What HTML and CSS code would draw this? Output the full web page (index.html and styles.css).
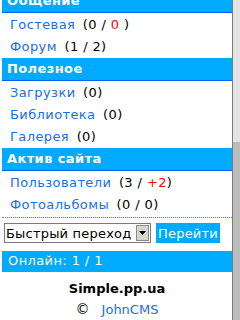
FILE: index.html
```html
<!DOCTYPE html>
<html lang="ru">
<head>
    <meta charset="UTF-8">
    <title>Simple.pp.ua</title>
    <link rel="stylesheet" href="styles.css">
</head>
<body>
<div id="screen">
    <div id="page">
        <div class="phdr">Общение</div>
        <div class="menu"><a href="#">Гостевая</a> <span class="cnt">(0 / <span class="red">0</span> )</span></div>
        <div class="menu"><a href="#">Форум</a> <span class="cnt">(1 / 2)</span></div>
        <div class="phdr">Полезное</div>
        <div class="menu"><a href="#">Загрузки</a> <span class="cnt">(0)</span></div>
        <div class="menu"><a href="#">Библиотека</a> <span class="cnt">(0)</span></div>
        <div class="menu"><a href="#">Галерея</a> <span class="cnt">(0)</span></div>
        <div class="phdr">Актив сайта</div>
        <div class="menu"><a href="#">Пользователи</a> <span class="cnt">(3 / <span class="red">+2</span>)</span></div>
        <div class="menu"><a href="#">Фотоальбомы</a> <span class="cnt">(0 / 0)</span></div>
        <form class="go">
            <div class="select">
                <select>
                    <option>Быстрый переход</option>
                </select>
                <span class="arrow">
                    <svg width="7" height="4" viewBox="0 0 7 4"><path d="M0 0h7L3.5 4z" fill="#000"/></svg>
                </span>
            </div>
            <button type="button">Перейти</button>
        </form>
        <div class="online">Онлайн: 1 / 1</div>
        <div class="footer">
            <div class="site">Simple.pp.ua</div>
            <div class="copy"><span class="sign">©</span><a href="#">JohnCMS</a></div>
        </div>
    </div>
    <div id="scrollbar"><div class="thumb"></div></div>
</div>
<script>
document.getElementById('page').scrollTop = 12;
</script>
</body>
</html>
```

FILE: styles.css
```css
* {
    margin: 0;
    padding: 0;
    box-sizing: border-box;
}
html, body {
    height: 100%;
    background: #fff;
    font-family: "DejaVu Sans", sans-serif;
    font-size: 13px;
    letter-spacing: 0.4px;
    color: #000;
}
a {
    color: #1a6ee8;
    text-decoration: none;
}
#screen {
    display: flex;
    height: 320px;
}
#page {
    width: 232px;
    height: 320px;
    overflow: hidden;
    padding-left: 2px;
}
#scrollbar {
    width: 8px;
    border-left: 1px solid #7c7c7c;
    background: #e4e4e4;
    display: flex;
    flex-direction: column;
    justify-content: flex-end;
}
#scrollbar .thumb {
    height: 178px;
    background: #bcbcbc;
}
.phdr {
    margin-top: 1px;
    height: 23px;
    line-height: 22px;
    padding-left: 5px;
    background: #00aaff;
    border-bottom: 1px solid #0060f0;
    color: #fff;
    font-weight: bold;
}
.menu {
    height: 22px;
    line-height: 23px;
    padding-left: 8px;
    white-space: nowrap;
}
.cnt {
    margin-left: 3px;
}
.red {
    color: #f00;
}
.go {
    margin-top: 2px;
    border-top: 1px dotted #00aaff;
    padding: 5px 0 0 2px;
    display: flex;
    gap: 5px;
    height: 27px;
}
.select {
    display: flex;
    width: 147px;
    height: 20px;
    border: 1px solid #7a7a7a;
    background: #fff;
}
.select select {
    appearance: none;
    flex-grow: 1;
    min-width: 0;
    border: 0;
    background: #fff;
    font-family: "DejaVu Sans", sans-serif;
    font-size: 13px;
    letter-spacing: 0.2px;
    color: #000;
    padding-left: 1px;
    outline: none;
}
.arrow {
    width: 13px;
    margin: 1px;
    background: #d8d6d0;
    border: 1px solid #8a8a8a;
    display: flex;
    align-items: center;
    justify-content: center;
}
.go button {
    height: 20px;
    padding: 0 2px;
    background: #00aaff;
    color: #fff;
    border: 0;
    font-family: "DejaVu Sans", sans-serif;
    font-size: 13px;
    letter-spacing: 0.2px;
}
.online {
    margin-top: 7px;
    height: 21px;
    line-height: 20px;
    padding-left: 6px;
    background: #00aaff;
    color: #fff;
}
.footer {
    text-align: center;
    padding-top: 6px;
}
.site {
    font-weight: bold;
    letter-spacing: 0;
    line-height: 21px;
}
.copy {
    line-height: 21px;
    letter-spacing: 0;
}
.copy .sign {
    font-size: 14px;
    margin-right: 12px;
}
```
